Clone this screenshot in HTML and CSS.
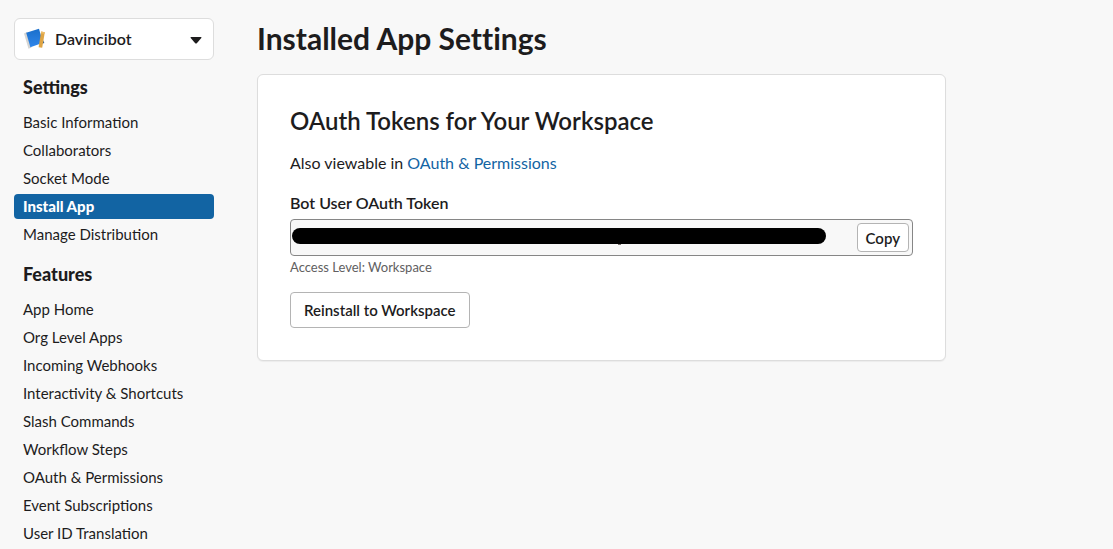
FILE: index.html
```html
<!DOCTYPE html>
<html lang="en">
<head>
<meta charset="utf-8">
<meta name="viewport" content="width=device-width, initial-scale=1">
<title>Installed App Settings</title>
<link rel="stylesheet" href="styles.css">
</head>
<body>
<div class="layout">
  <aside class="sidebar">
    <div class="app-picker">
      <select class="app-select" aria-label="App">
        <option>Davincibot</option>
      </select>
      <svg class="app-icon" viewBox="0 0 24 24" aria-hidden="true">
        <defs>
          <linearGradient id="page" x1="0" y1="0" x2="0" y2="1">
            <stop offset="0" stop-color="#1a6fcb"/>
            <stop offset="1" stop-color="#2f86ea"/>
          </linearGradient>
        </defs>
        <path d="M1 6.500 4 5l4.500 15.500-3 1.200z" fill="#d5d5d3"/>
        <path d="M3.200 5.800 16 1.800l4 14-12.600 4.400z" fill="url(#page)"/>
        <path d="m19 11 2.400 5-3 1z" fill="#35618f"/>
        <path d="m18.200 4.600 3.600.6-2.600 15.600-3.600-.6z" fill="#dfa545"/>
        <path d="m18.200 4.600 3.600.6-.3 1.600-3.600-.6z" fill="#edbd69"/>
      </svg>
      <svg class="app-caret" viewBox="0 0 12 7" aria-hidden="true">
        <path d="M1.200 0h9.600q1.200 0 .5 1L7 5.900q-1 1.100-2 0L.7 1Q0 0 1.200 0z" fill="#1d1c1d"/>
      </svg>
    </div>
    <nav class="nav" aria-label="App configuration">
      <h2 class="nav-title">Settings</h2>
      <ul class="nav-list">
        <li><a class="nav-link" href="#">Basic Information</a></li>
        <li><a class="nav-link" href="#">Collaborators</a></li>
        <li><a class="nav-link" href="#">Socket Mode</a></li>
        <li><a class="nav-link nav-link-active" href="#" aria-current="page">Install App</a></li>
        <li><a class="nav-link" href="#">Manage Distribution</a></li>
      </ul>
      <h2 class="nav-title">Features</h2>
      <ul class="nav-list">
        <li><a class="nav-link" href="#">App Home</a></li>
        <li><a class="nav-link" href="#">Org Level Apps</a></li>
        <li><a class="nav-link" href="#">Incoming Webhooks</a></li>
        <li><a class="nav-link" href="#">Interactivity &amp; Shortcuts</a></li>
        <li><a class="nav-link" href="#">Slash Commands</a></li>
        <li><a class="nav-link" href="#">Workflow Steps</a></li>
        <li><a class="nav-link" href="#">OAuth &amp; Permissions</a></li>
        <li><a class="nav-link" href="#">Event Subscriptions</a></li>
        <li><a class="nav-link" href="#">User ID Translation</a></li>
      </ul>
    </nav>
  </aside>
  <main class="main">
    <h1 class="page-title">Installed App Settings</h1>
    <section class="card">
      <h2 class="card-title">OAuth Tokens for Your Workspace</h2>
      <p class="card-text">Also viewable in <a class="link" href="#">OAuth &amp; Permissions</a></p>
      <label class="field-label" for="token">Bot User OAuth Token</label>
      <div class="token">
        <input class="token-input" id="token" type="text" readonly>
        <span class="token-mask"></span>
        <button class="button button-small" type="button">Copy</button>
      </div>
      <p class="hint">Access Level: Workspace</p>
      <button class="button" type="button">Reinstall to Workspace</button>
    </section>
  </main>
</div>
</body>
</html>
```

FILE: styles.css
```css
* {
  box-sizing: border-box;
}

body {
  margin: 0;
  background: #f8f8f8;
  color: #1d1c1d;
  font-family: Lato, "Liberation Sans", sans-serif;
  font-size: 15px;
  line-height: 24px;
}

h1, h2, p, ul {
  margin: 0;
  padding: 0;
}

.layout {
  display: flex;
  gap: 43px;
  height: 100vh;
  overflow: hidden;
  padding: 18px 14px 0;
}

.sidebar {
  flex: 0 0 200px;
}

.app-picker {
  position: relative;
  margin-bottom: 15px;
}

.app-select {
  display: block;
  width: 100%;
  height: 42px;
  padding: 0 32px 0 40px;
  border: 1px solid #dddddd;
  border-radius: 6px;
  background: #ffffff;
  color: #1d1c1d;
  font: 600 16px/24px Lato, "Liberation Sans", sans-serif;
  appearance: none;
}

.app-icon {
  position: absolute;
  top: 9px;
  left: 9px;
  width: 24px;
  height: 24px;
  pointer-events: none;
}

.app-caret {
  position: absolute;
  top: 19px;
  right: 12px;
  width: 12px;
  height: 7px;
  pointer-events: none;
}

.nav-title {
  padding: 0 9px;
  font-size: 18px;
  font-weight: 900;
  line-height: 24px;
}

.nav-list {
  display: flex;
  flex-direction: column;
  gap: 3px;
  margin: 11px 0 15px;
  list-style: none;
}

.nav-link {
  display: block;
  padding: 0 9px;
  border-radius: 4px;
  color: #1d1c1d;
  line-height: 25px;
  text-decoration: none;
}

.nav-link-active {
  background: #1264a3;
  color: #ffffff;
  font-weight: 900;
}

.main {
  flex: 1;
  min-width: 0;
  max-width: 689px;
}

.page-title {
  margin-bottom: 16px;
  font-size: 30px;
  font-weight: 700;
  line-height: 40px;
  font-variant-ligatures: none;
}

.card {
  padding: 32px;
  border: 1px solid #dddddd;
  border-radius: 6px;
  background: #ffffff;
  box-shadow: 0 1px 1px #0000000d;
}

.card-title {
  margin-bottom: 16px;
  font-size: 24px;
  font-weight: 600;
  line-height: 28px;
}

.card-text {
  margin-bottom: 16px;
  font-size: 16px;
}

.link {
  color: #1264a3;
  text-decoration: none;
}

.field-label {
  display: block;
  margin-bottom: 4px;
  font-size: 16px;
  font-weight: 600;
}

.token {
  position: relative;
  display: flex;
  align-items: center;
  height: 37px;
  padding-right: 3px;
  border: 1px solid #868686;
  border-radius: 4px;
  background: #f8f8f8;
}

.token-input {
  flex: 1;
  min-width: 0;
  height: 100%;
  padding: 0 12px;
  border: 0;
  background: transparent;
  font: inherit;
  outline: 0;
}

.token-mask {
  position: absolute;
  top: 8px;
  left: 1px;
  right: 86px;
  height: 16px;
  border-radius: 8px;
  background: #000000;
}

.token-mask::after {
  content: "";
  position: absolute;
  top: 16px;
  left: 61%;
  width: 3px;
  height: 1px;
  background: #77706c;
}

.hint {
  margin-bottom: 14px;
  color: #616061;
  font-size: 13px;
  line-height: 22px;
}

.button {
  height: 36px;
  padding: 0 13px;
  border: 1px solid #b4b4b4;
  border-radius: 4px;
  background: #ffffff;
  color: #1d1c1d;
  font: 600 15px/24px Lato, "Liberation Sans", sans-serif;
}

.button-small {
  height: 29px;
  padding: 0 8px;
}
```
